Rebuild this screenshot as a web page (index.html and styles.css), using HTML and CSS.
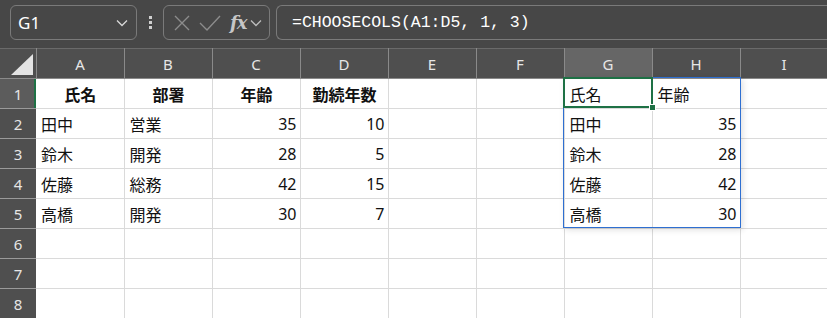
FILE: index.html
```html
<!DOCTYPE html>
<html lang="ja">
<head>
  <meta charset="UTF-8">
  <title>CHOOSECOLS</title>
  <link rel="stylesheet" href="styles.css">
</head>
<body>

  <!-- Formula Bar -->
  <div class="formula-bar">
    <div class="name-box">
      <span>G1</span>
      <svg class="chev" width="12" height="8" viewBox="0 0 12 8"><path d="M1 1.5 L6 6.5 L11 1.5" fill="none" stroke="#d8d8d8" stroke-width="1.3"/></svg>
    </div>
    <div class="dots"><i></i><i></i><i></i></div>
    <div class="fx-box">
      <svg width="18" height="18" viewBox="0 0 18 18"><path d="M2 2 L16 16 M16 2 L2 16" stroke="#8c8c8c" stroke-width="1.4"/></svg>
      <svg width="22" height="18" viewBox="0 0 22 18"><path d="M1 9 L8 16 L21 2" fill="none" stroke="#8c8c8c" stroke-width="1.4"/></svg>
      <span class="fx">fx</span>
      <svg class="chev" width="12" height="8" viewBox="0 0 12 8"><path d="M1 1.5 L6 6.5 L11 1.5" fill="none" stroke="#bdbdbd" stroke-width="1.3"/></svg>
    </div>
    <div class="formula">=CHOOSECOLS(A1:D5, 1, 3)</div>
  </div>

  <!-- Sheet -->
  <div class="sheet">
    <table class="grid">
      <colgroup>
        <col class="c-head"><col><col><col><col><col><col><col><col><col>
      </colgroup>
      <thead>
        <tr>
          <th class="corner"><div class="tri"></div></th>
          <th>A</th><th>B</th><th>C</th><th>D</th><th>E</th><th>F</th><th class="active">G</th><th>H</th><th>I</th>
        </tr>
      </thead>
      <tbody>
        <tr>
          <th class="active-row">1</th>
          <td class="bold">氏名</td><td class="bold">部署</td><td class="bold">年齢</td><td class="bold">勤続年数</td>
          <td></td><td></td><td>氏名</td><td>年齢</td><td></td>
        </tr>
        <tr>
          <th>2</th>
          <td>田中</td><td>営業</td><td class="num">35</td><td class="num">10</td>
          <td></td><td></td><td>田中</td><td class="num">35</td><td></td>
        </tr>
        <tr>
          <th>3</th>
          <td>鈴木</td><td>開発</td><td class="num">28</td><td class="num">5</td>
          <td></td><td></td><td>鈴木</td><td class="num">28</td><td></td>
        </tr>
        <tr>
          <th>4</th>
          <td>佐藤</td><td>総務</td><td class="num">42</td><td class="num">15</td>
          <td></td><td></td><td>佐藤</td><td class="num">42</td><td></td>
        </tr>
        <tr>
          <th>5</th>
          <td>高橋</td><td>開発</td><td class="num">30</td><td class="num">7</td>
          <td></td><td></td><td>高橋</td><td class="num">30</td><td></td>
        </tr>
        <tr><th>6</th><td></td><td></td><td></td><td></td><td></td><td></td><td></td><td></td><td></td></tr>
        <tr><th>7</th><td></td><td></td><td></td><td></td><td></td><td></td><td></td><td></td><td></td></tr>
        <tr><th>8</th><td></td><td></td><td></td><td></td><td></td><td></td><td></td><td></td><td></td></tr>
      </tbody>
    </table>

    <!-- spill range G1:H5 and selected cell G1 -->
    <div class="spill"></div>
    <div class="selected"><div class="handle"></div></div>
  </div>

</body>
</html>
```

FILE: styles.css
```css
* {
  box-sizing: border-box;
}

body {
  margin: 0;
  width: 827px;
  height: 318px;
  overflow: hidden;
  background: #fff;
  font-family: "Noto Sans", "Noto Sans CJK JP", sans-serif;
}

.formula-bar {
  height: 48px;
  background: #474747;
  display: flex;
  align-items: center;
  padding: 0 0 3px 10px;
}

.name-box {
  width: 127px;
  height: 35px;
  border: 1px solid #7a7a7a;
  border-radius: 6px;
  display: flex;
  align-items: center;
  justify-content: space-between;
  padding: 0 8px 0 7px;
  color: #fff;
  font-size: 17px;
}

.dots {
  width: 26px;
  display: flex;
  flex-direction: column;
  align-items: center;
  gap: 2px;
}

.dots i {
  width: 3px;
  height: 3px;
  background: #d0d0d0;
}

.fx-box {
  width: 107px;
  height: 35px;
  border: 1px solid #7a7a7a;
  border-radius: 6px;
  display: flex;
  align-items: center;
  padding: 0 3px 0 9px;
  gap: 4px;
}

.fx-box svg:nth-child(2) {
  margin-left: 4px;
}

.fx {
  font-family: "DejaVu Serif", "Liberation Serif", serif;
  font-style: italic;
  font-weight: bold;
  font-size: 18px;
  color: #c6c6c6;
  margin-left: 5px;
  letter-spacing: -1px;
}

.formula {
  flex: 1;
  height: 35px;
  margin-left: 6px;
  border: 1px solid #7a7a7a;
  border-right: none;
  border-radius: 6px 0 0 6px;
  display: flex;
  align-items: center;
  padding-left: 15px;
  color: #fff;
  font-family: "Liberation Mono", "DejaVu Sans Mono", monospace;
  font-size: 16.5px;
}

.sheet {
  position: relative;
}

.grid {
  border-collapse: collapse;
  table-layout: fixed;
  width: 828px;
}

.grid col {
  width: 88px;
}

.grid col.c-head {
  width: 36px;
}

.grid th {
  background: #4f4f4f;
  color: #e6e6e6;
  font-weight: normal;
  font-size: 15px;
  padding: 0;
  height: 30px;
  border-right: 1px solid #8a8a8a;
  border-bottom: 1px solid #8a8a8a;
}

.grid thead th {
  height: 30px;
  border-top: 1px solid #6a6a6a;
}

.grid thead th.active {
  background: #666;
}

.grid tbody th {
  border-right: none;
  border-bottom: 1px solid #9a9a9a;
}

.grid tbody th.active-row {
  background: #5c5c5c;
  box-shadow: inset -2px 0 0 #1e7145;
}

.corner {
  position: relative;
}

.tri {
  position: absolute;
  right: 3px;
  bottom: 3px;
  width: 0;
  height: 0;
  border-left: 22px solid transparent;
  border-bottom: 21px solid #e4e4e4;
}

.grid td {
  height: 30px;
  padding: 0 4px 0 5px;
  border-right: 1px solid #dadada;
  border-bottom: 1px solid #dadada;
  font-size: 16px;
  color: #111;
  white-space: nowrap;
  overflow: hidden;
}

.grid td.bold {
  font-weight: bold;
  text-align: center;
}

.grid td.num {
  text-align: right;
  padding-right: 3px;
  font-family: "Noto Sans", sans-serif;
}

.spill {
  position: absolute;
  left: 563px;
  top: 29px;
  width: 178px;
  height: 151px;
  border: 1px solid #2e6fd1;
  box-shadow: 2px 2px 6px rgba(0, 0, 0, 0.12);
  pointer-events: none;
}

.selected {
  position: absolute;
  left: 563px;
  top: 29px;
  width: 90px;
  height: 31px;
  border: 2px solid #1e7145;
}

.handle {
  position: absolute;
  right: -5px;
  bottom: -5px;
  width: 7px;
  height: 7px;
  background: #1e7145;
  border: 1px solid #fff;
}
```
